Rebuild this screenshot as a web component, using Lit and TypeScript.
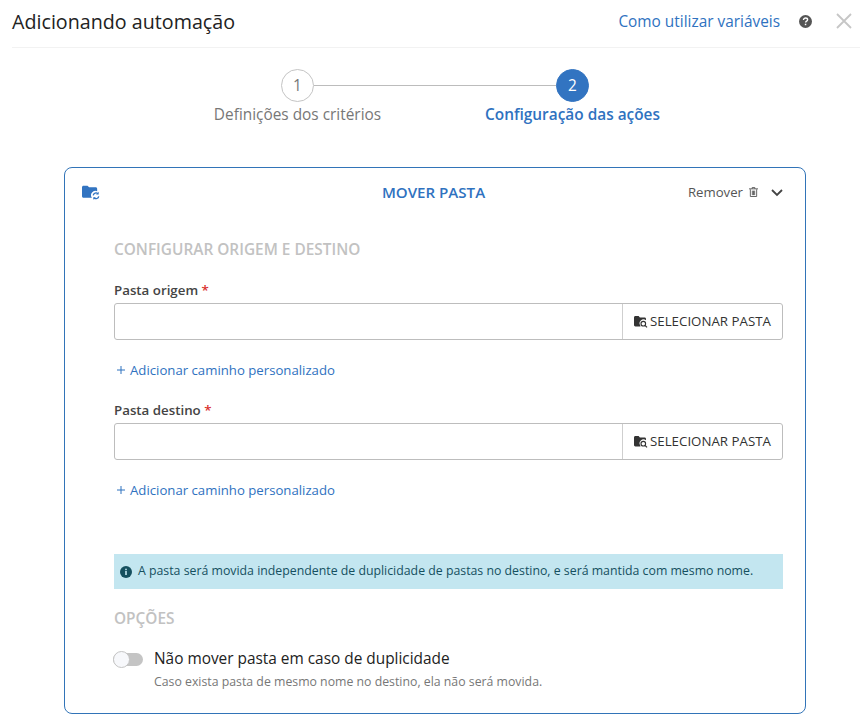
import { LitElement, html, css } from "lit";
import { customElement } from "lit/decorators.js";

const pickIcon = html`<svg class="pick-icon" viewBox="0 0 14 12" width="14" height="12">
  <path fill="#333" d="M0 1.500C0 .7.6 0 1.400 0h3.200l1.300 1.600h4.700c.8 0 1.400.6 1.400 1.400v1.200a4 4 0 0 0-5.600 5.600v.7H1.400C.6 10.500 0 9.900 0 9.100z"/>
  <circle cx="9.300" cy="7.700" r="2.300" fill="none" stroke="#333" stroke-width="1.100"/>
  <path d="M11 9.400l2 2" stroke="#333" stroke-width="1.200"/>
</svg>`;

@customElement("app-root")
export class AppRoot extends LitElement {
  static styles = css`
    :host {
      display: block;
      width: 864px;
      height: 721px;
      overflow: hidden;
      background: #fff;
      font-family: "Open Sans", sans-serif;
      color: #333;
    }
    * {
      box-sizing: border-box;
    }
    .header {
      display: flex;
      align-items: center;
      height: 48px;
      margin: 0 4px 0 12px;
      padding-bottom: 5px;
      border-bottom: 1px solid #f2f2f2;
    }
    .title {
      font-size: 19.700px;
      color: #222;
      flex: 1;
    }
    .how {
      font-size: 15.400px;
      color: #2f72bf;
    }
    .help {
      margin-left: 19px;
      display: block;
    }
    .close {
      margin-left: 24px;
      margin-right: 8px;
      display: block;
    }
    .track {
      display: flex;
      align-items: center;
      margin: 21px 0 0 281px;
      width: 308px;
    }
    .dot {
      width: 33px;
      height: 33px;
      border-radius: 50%;
      display: flex;
      align-items: center;
      justify-content: center;
      font-size: 15.400px;
      border: 1px solid #c4c4c4;
      color: #777;
      flex: none;
    }
    .dot.on {
      background: #3274c1;
      border-color: #3274c1;
      color: #fff;
    }
    .line {
      flex: 1;
      height: 1px;
      background: #bcbcbc;
    }
    .labels {
      display: grid;
      grid-template-columns: 275px 275px;
      margin: 3px 0 0 160px;
      font-size: 15.400px;
      line-height: 20px;
      text-align: center;
      color: #777;
    }
    .labels .on {
      color: #2f72bf;
      font-weight: 600;
    }
    .card {
      margin: 42px 0 0 64px;
      width: 742px;
      height: 547px;
      border: 1px solid #3274b8;
      border-radius: 8px;
      padding: 0 22px 0 49px;
    }
    .card-head {
      display: grid;
      grid-template-columns: 1fr auto 1fr;
      align-items: center;
      height: 50px;
      margin: 0 0 0 -32px;
    }
    .card-name {
      font-size: 15.100px;
      font-weight: 600;
      color: #2f72bf;
      margin-left: 2px;
      padding-bottom: 2px;
    }
    .folder {
      display: block;
    }
    .remove {
      display: flex;
      align-items: center;
      justify-content: flex-end;
      font-size: 13.200px;
      color: #555;
      padding-bottom: 2px;
    }
    .trash {
      display: block;
      margin-left: 6px;
    }
    .chevron {
      display: block;
      margin-left: 13px;
      margin-top: 1px;
    }
    .section {
      font-size: 15.400px;
      font-weight: 600;
      color: #c2c2c2;
      line-height: 20px;
      margin-top: 22px;
    }
    .label {
      font-size: 13.300px;
      font-weight: 600;
      color: #444;
      line-height: 18px;
      margin-bottom: 4px;
    }
    .label span {
      color: #d9302c;
    }
    .first {
      margin-top: 21px;
    }
    .second {
      margin-top: 22px;
    }
    .field {
      display: flex;
      height: 37px;
      border: 1px solid #bdbdbd;
      border-radius: 3px;
    }
    .input {
      flex: 1;
    }
    .pick {
      width: 160px;
      border-left: 1px solid #cfcfcf;
      display: flex;
      align-items: center;
      padding: 0 0 2px 11px;
      font-size: 13.300px;
      color: #333;
    }
    .pick-icon {
      display: block;
      margin-right: 2px;
      margin-top: 2px;
    }
    .add {
      display: flex;
      align-items: center;
      gap: 5px;
      margin-top: 21px;
      padding-left: 3px;
      font-size: 13.200px;
      line-height: 18px;
      color: #2f72bf;
    }
    .info {
      display: flex;
      align-items: center;
      gap: 6px;
      height: 35px;
      margin-top: 55px;
      padding: 0 0 2px 6px;
      background: #c3e6f0;
      color: #15505f;
      font-size: 12.320px;
    }
    .info svg {
      display: block;
      margin-top: 2px;
    }
    .options {
      margin-top: 20px;
    }
    .toggle-row {
      display: flex;
      margin: 20px 0 0 -1px;
      gap: 11px;
    }
    .toggle {
      position: relative;
      width: 30px;
      height: 13px;
      border-radius: 7px;
      background: #c4c4c4;
      margin-top: 4px;
      flex: none;
    }
    .knob {
      position: absolute;
      left: 0;
      top: -2px;
      width: 17px;
      height: 17px;
      border-radius: 50%;
      background: #f7f8fb;
      border: 1px solid #c4c4c4;
    }
    .opt-title {
      font-size: 15.400px;
      line-height: 20px;
      color: #222;
    }
    .opt-sub {
      font-size: 12.300px;
      line-height: 16px;
      margin-top: 5px;
      color: #777;
    }
  `;

  renderField(label: string, cls: string) {
    return html`
      <div class="label ${cls}">${label} <span>*</span></div>
      <div class="field">
        <div class="input"></div>
        <div class="pick">${pickIcon}SELECIONAR PASTA</div>
      </div>
      <div class="add">
        <svg width="8" height="8" viewBox="0 0 8 8"><path d="M4 0v8M0 4h8" stroke="#2f72bf" stroke-width="1"/></svg>
        Adicionar caminho personalizado
      </div>
    `;
  }

  render() {
    return html`
      <div class="header">
        <div class="title">Adicionando automação</div>
        <div class="how">Como utilizar variáveis</div>
        <svg class="help" width="13" height="13" viewBox="0 0 13 13">
          <circle cx="6.500" cy="6.500" r="6.500" fill="#555"/>
          <path d="M4.500 5c0-1.300 1-2 2.100-2s2 .7 2 1.700c0 1.500-2 1.400-2 2.900" fill="none" stroke="#fff" stroke-width="1.400"/>
          <rect x="5.800" y="8.700" width="1.500" height="1.500" fill="#fff"/>
        </svg>
        <svg class="close" width="16" height="16" viewBox="0 0 16 16">
          <path d="M1 1l14 14M15 1L1 15" stroke="#c6c6c6" stroke-width="1.800"/>
        </svg>
      </div>

      <div class="track">
        <div class="dot">1</div>
        <div class="line"></div>
        <div class="dot on">2</div>
      </div>
      <div class="labels">
        <div>Definições dos critérios</div>
        <div class="on">Configuração das ações</div>
      </div>

      <div class="card">
        <div class="card-head">
          <svg class="folder" width="18" height="16" viewBox="0 0 19 16">
            <path fill="#3274c1" d="M0 2c0-1 .7-1.700 1.600-1.700h4.200L7.500 2h6.900c.9 0 1.600.7 1.600 1.600v2.600a4.500 4.500 0 0 0-5.500 6.800H1.600C.7 13 0 12.300 0 11.400z"/>
            <path fill="none" stroke="#3274c1" stroke-width="1.300" d="M11.800 10.500a3 3 0 0 1 5-1.700M17.700 11.500a3 3 0 0 1-5 1.700"/>
            <path fill="#3274c1" d="M17.600 6.800v2.800h-2.800zM11.900 15.200v-2.800h2.800z"/>
          </svg>
          <div class="card-name">MOVER PASTA</div>
          <div class="remove">
            Remover
            <svg class="trash" width="9" height="10" viewBox="0 0 10 11">
              <path d="M0 2h10M3.500 2V.6h3V2M1.500 2.500v8h7v-8M3.700 4v5M5 4v5M6.300 4v5" fill="none" stroke="#555" stroke-width="1"/>
            </svg>
            <svg class="chevron" width="12" height="8" viewBox="0 0 12 8">
              <path d="M1 1l5 5 5-5" fill="none" stroke="#444" stroke-width="1.800"/>
            </svg>
          </div>
        </div>

        <div class="section">CONFIGURAR ORIGEM E DESTINO</div>
        ${this.renderField("Pasta origem", "first")}
        ${this.renderField("Pasta destino", "second")}

        <div class="info">
          <svg width="12" height="12" viewBox="0 0 12 12">
            <circle cx="6" cy="6" r="6" fill="#15505f"/>
            <rect x="5.200" y="5" width="1.600" height="4" fill="#c3e6f0"/>
            <rect x="5.200" y="2.700" width="1.600" height="1.500" fill="#c3e6f0"/>
          </svg>
          A pasta será movida independente de duplicidade de pastas no destino, e será mantida com mesmo nome.
        </div>

        <div class="section options">OPÇÕES</div>
        <div class="toggle-row">
          <div class="toggle"><div class="knob"></div></div>
          <div>
            <div class="opt-title">Não mover pasta em caso de duplicidade</div>
            <div class="opt-sub">Caso exista pasta de mesmo nome no destino, ela não será movida.</div>
          </div>
        </div>
      </div>
    `;
  }
}
